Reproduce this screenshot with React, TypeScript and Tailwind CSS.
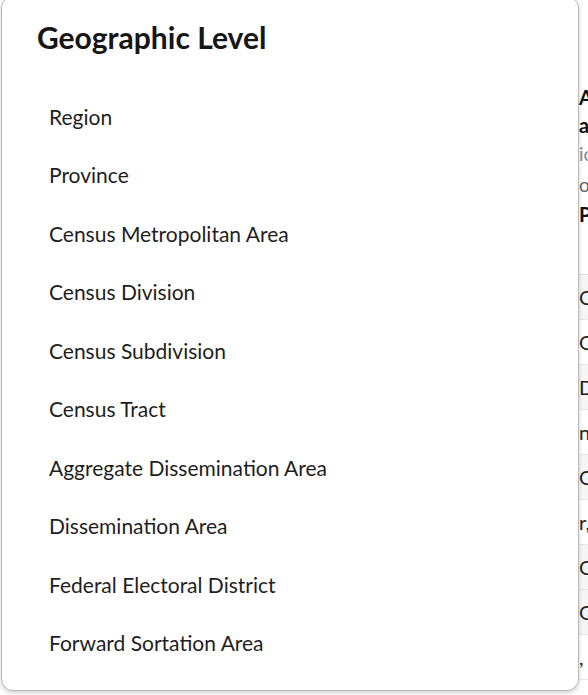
import React from 'react';

const levels = [
  'Region',
  'Province',
  'Census Metropolitan Area',
  'Census Division',
  'Census Subdivision',
  'Census Tract',
  'Aggregate Dissemination Area',
  'Dissemination Area',
  'Federal Electoral District',
  'Forward Sortation Area',
];

const tableRows = [
  { label: 'Canada', shaded: true },
  { label: 'Ontario', shaded: false },
  { label: 'DIVISION', shaded: true },
  { label: 'n, ON', shaded: false },
  { label: 'Ottawa', shaded: true },
  { label: 'r, QC', shaded: false },
  { label: 'Calgary', shaded: true },
  { label: 'Guelph', shaded: true },
  { label: ', MB', shaded: false },
];

const App: React.FC = () => {
  return (
    <div className="relative w-[588px] h-[695px] overflow-hidden bg-white font-['Lato','Noto_Sans',sans-serif]">
      {/* page behind the popup */}
      <div className="flex h-full">
        <div className="w-[579px] shrink-0" />
        <div className="flex-1 min-w-0 whitespace-nowrap">
          <div className="pt-[86px] flex flex-col">
            <div className="h-[28px] text-[20px] font-bold text-[#111] leading-[22px]">Area</div>
            <div className="h-[29px] text-[20px] font-bold text-[#111] leading-[22px]">an</div>
            <div className="h-[31px] text-[19px] text-[#7a8a9a] leading-[22px]">ic</div>
            <div className="h-[29px] text-[19px] text-[#666] leading-[22px]">ou</div>
            <div className="h-[28px] text-[20px] font-bold text-[#111] leading-[22px]">PP</div>
          </div>
          <div className="mt-[43px] border-t border-[#ddd]">
            {tableRows.map((r, i) => (
              <div
                key={i}
                className={`h-[45px] flex items-center text-[20px] text-[#222] border-b border-[#e8e8e8] ${r.shaded ? 'bg-[#f5f5f5]' : 'bg-white'}`}
              >
                {r.label}
              </div>
            ))}
          </div>
        </div>
      </div>

      {/* popup */}
      <div className="absolute left-[1px] top-[-4px] w-[578px] bg-white border border-[#b9b9b9] rounded-[12px] shadow-[0_2px_4px_rgba(0,0,0,0.18)] pl-[35px] pr-9 pt-[22px] pb-[18px]">
        <h2 className="text-[30px] font-bold text-[#161616] leading-[36px]">Geographic Level</h2>
        <ul className="mt-[32px]">
          {levels.map(l => (
            <li key={l} className="pl-[12px] h-[58.5px] flex items-center text-[21px] text-[#1e1e1e] cursor-pointer hover:bg-gray-50">
              {l}
            </li>
          ))}
        </ul>
      </div>
    </div>
  );
};

export default App;
